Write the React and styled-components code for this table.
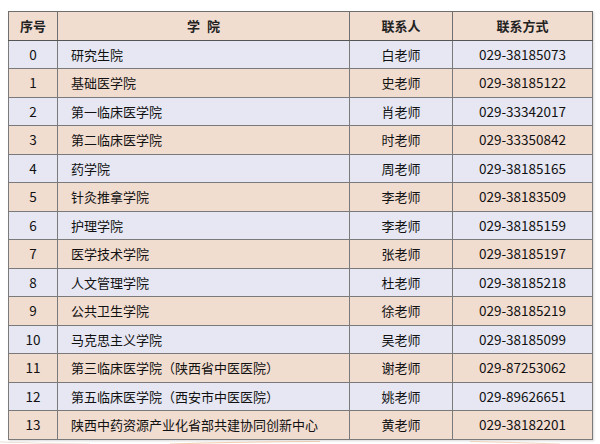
import React from "react";
import styled, { createGlobalStyle } from "styled-components";

const GlobalStyle = createGlobalStyle`
  html, body {
    margin: 0;
    padding: 0;
    background: #fff;
    font-family: "Noto Sans CJK SC", "Noto Sans", sans-serif;
  }
`;

const rows = [
  ["0", "研究生院", "白老师", "029-38185073"],
  ["1", "基础医学院", "史老师", "029-38185122"],
  ["2", "第一临床医学院", "肖老师", "029-33342017"],
  ["3", "第二临床医学院", "时老师", "029-33350842"],
  ["4", "药学院", "周老师", "029-38185165"],
  ["5", "针灸推拿学院", "李老师", "029-38183509"],
  ["6", "护理学院", "李老师", "029-38185159"],
  ["7", "医学技术学院", "张老师", "029-38185197"],
  ["8", "人文管理学院", "杜老师", "029-38185218"],
  ["9", "公共卫生学院", "徐老师", "029-38185219"],
  ["10", "马克思主义学院", "吴老师", "029-38185099"],
  ["11", "第三临床医学院（陕西省中医医院）", "谢老师", "029-87253062"],
  ["12", "第五临床医学院（西安市中医医院）", "姚老师", "029-89626651"],
  ["13", "陕西中药资源产业化省部共建协同创新中心", "黄老师", "029-38182201"],
];

const App = () => {
  return (
    <>
      <GlobalStyle />
      <Page>
        <Table>
          <colgroup>
            <col style={{ width: 49 }} />
            <col style={{ width: 292 }} />
            <col style={{ width: 103 }} />
            <col />
          </colgroup>
          <thead>
            <tr>
              <Th>序号</Th>
              <Th>
                学<Gap />院
              </Th>
              <Th>联系人</Th>
              <Th>联系方式</Th>
            </tr>
          </thead>
          <tbody>
            {rows.map((r, i) => (
              <Row key={r[0]} $alt={i % 2 === 1}>
                <Td $num>{r[0]}</Td>
                <Td $left>{r[1]}</Td>
                <Td>{r[2]}</Td>
                <Td $num>{r[3]}</Td>
              </Row>
            ))}
          </tbody>
        </Table>
        <Deco viewBox="0 0 600 8" preserveAspectRatio="none">
          <path d="M0 2 Q 40 6 90 7" stroke="#e8d2c2" strokeWidth="1.2" fill="none" />
          <path d="M170 7 Q 230 2 320 1" stroke="#f0b98e" strokeWidth="1" fill="none" />
          <path d="M470 1 Q 510 3 560 7" stroke="#f0c4a4" strokeWidth="1" fill="none" />
        </Deco>
      </Page>
    </>
  );
};

export default App;

const Page = styled.div`
  width: 600px;
  height: 444px;
  padding: 11px 7px 0 8px;
  box-sizing: border-box;
  overflow: hidden;
  display: flex;
  flex-direction: column;
`;

const Table = styled.table`
  width: 585px;
  border-collapse: collapse;
  table-layout: fixed;
  border: 1px solid #6f6f6f;
  box-shadow: 1px 1px 2px rgba(0, 0, 0, 0.15);
  font-size: 13px;
  color: #111;
`;

const Th = styled.th`
  height: 27.5px;
  padding: 0;
  background: #f1dcd0;
  border: 1px solid #6f6f6f;
  border-bottom: 1.5px solid #555;
  font-weight: bold;
  text-align: center;
  color: #222;
`;

const Gap = styled.span`
  display: inline-block;
  width: 7px;
`;

const Row = styled.tr`
  background: ${(p) => (p.$alt ? "#f1dcd0" : "#e6e7f3")};
`;

const Td = styled.td`
  height: 27.5px;
  padding: 0 ${(p) => (p.$left ? "13px" : "0")};
  border: 1px solid #7a7a7a;
  text-align: ${(p) => (p.$left ? "left" : "center")};
  font-size: ${(p) => (p.$num ? "13.5px" : "13px")};
  white-space: nowrap;
  line-height: 1;
`;

const Deco = styled.svg`
  width: 600px;
  height: 6px;
  margin-left: -8px;
  margin-top: 1px;
`;
